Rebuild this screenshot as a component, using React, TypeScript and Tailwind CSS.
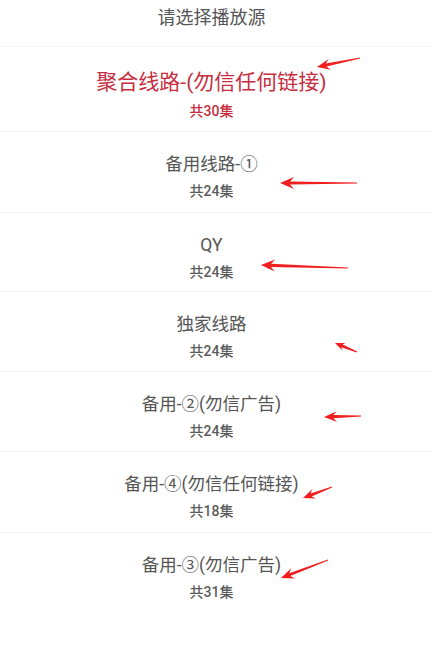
import React from "react";

type Row = { title: string; count: string; active?: boolean; h: string };

const rows: Row[] = [
  { title: "聚合线路-(勿信任何链接)", count: "共30集", active: true, h: "h-[85px]" },
  { title: "备用线路-①", count: "共24集", h: "h-[81px]" },
  { title: "QY", count: "共24集", h: "h-[79px]" },
  { title: "独家线路", count: "共24集", h: "h-[80px]" },
  { title: "备用-②(勿信广告)", count: "共24集", h: "h-[80px]" },
  { title: "备用-④(勿信任何链接)", count: "共18集", h: "h-[81px]" },
  { title: "备用-③(勿信广告)", count: "共31集", h: "h-[80px]" },
];

type Arrow = [number, number, number, number, number];
const arrows: Arrow[] = [
  [360, 58, 317, 67, 13],
  [357, 183, 280, 183, 14],
  [348, 268, 261, 265, 14],
  [357, 352, 335, 343, 10],
  [361, 416, 324, 417, 13],
  [332, 487, 303, 498, 12],
  [328, 560, 281, 578, 13],
];

function arrowPoints([x1, y1, x2, y2, h]: Arrow) {
  const dx = x2 - x1;
  const dy = y2 - y1;
  const L = Math.hypot(dx, dy);
  const ux = dx / L;
  const uy = dy / L;
  const nx = -uy;
  const ny = ux;
  const w = h * 0.42;
  const bx = x2 - ux * h * 0.72;
  const by = y2 - uy * h * 0.72;
  const cx = x2 - ux * h;
  const cy = y2 - uy * h;
  const pts = [
    [x1 + nx * 0.4, y1 + ny * 0.4],
    [bx + nx * 1.6, by + ny * 1.6],
    [cx + nx * w, cy + ny * w],
    [x2, y2],
    [cx - nx * w, cy - ny * w],
    [bx - nx * 1.6, by - ny * 1.6],
    [x1 - nx * 0.4, y1 - ny * 0.4],
  ];
  return pts.map((p) => `${p[0].toFixed(1)},${p[1].toFixed(1)}`).join(" ");
}

export default function App() {
  return (
    <div
      className="relative w-[432px] h-[651px] bg-white overflow-hidden"
      style={{ fontFamily: 'Roboto, "Noto Sans CJK SC", sans-serif' }}
    >
      <div className="h-[47px] border-b border-[#f2f2f2] flex justify-center pt-[5px] pr-[9px]">
        <span className="text-[18px] leading-[26px] text-[#555555]">请选择播放源</span>
      </div>
      {rows.map((r, i) => (
        <div
          key={i}
          className={`${r.h} flex flex-col items-center pr-[9px] ${
            i < rows.length - 1 ? "border-b border-[#f2f2f2]" : ""
          } ${r.active ? "pt-[21px]" : "pt-[20px]"}`}
        >
          {r.active ? (
            <>
              <span className="text-[21px] leading-[28px] text-[#c62d3f]">{r.title}</span>
              <span className="text-[14px] leading-[20px] font-medium text-[#c62d3f] mt-[5px]">{r.count}</span>
            </>
          ) : (
            <>
              <span className="text-[17.5px] leading-[25px] text-[#555555]">{r.title}</span>
              <span className="text-[14px] leading-[20px] font-medium text-[#5c5c5c] mt-[4px]">{r.count}</span>
            </>
          )}
        </div>
      ))}
      <svg className="absolute left-0 top-0 pointer-events-none" width="432" height="651">
        {arrows.map((a, i) => (
          <polygon key={i} points={arrowPoints(a)} fill="#f01e1e" />
        ))}
      </svg>
    </div>
  );
}
